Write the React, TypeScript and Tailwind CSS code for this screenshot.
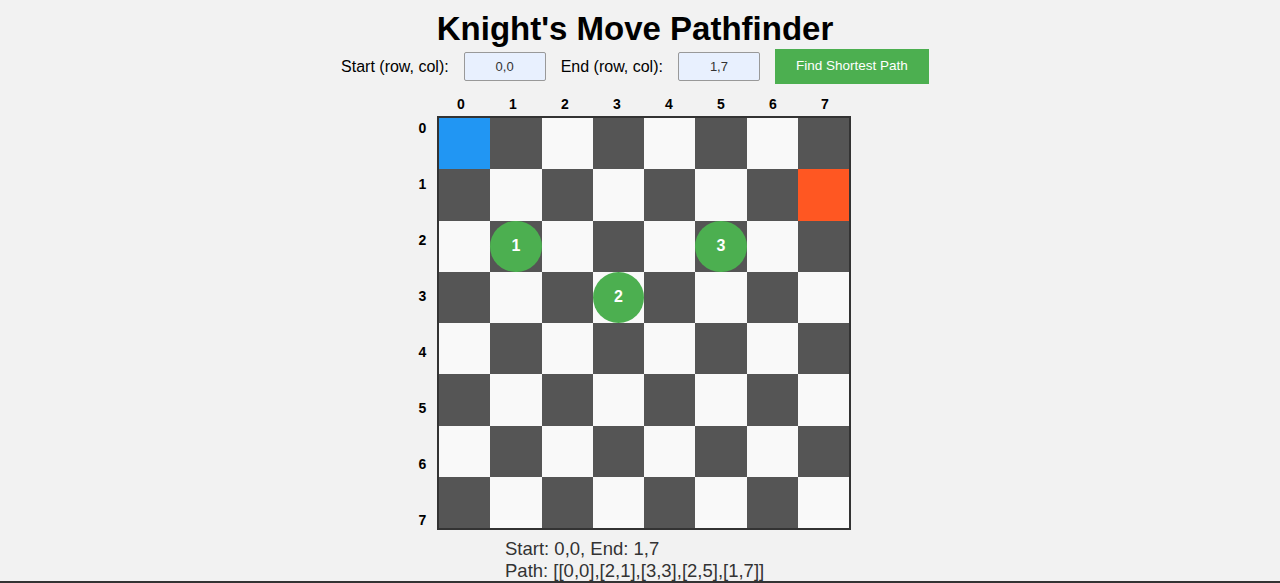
import React, { useState } from "react";

const SIZE = 8;

const App: React.FC = () => {
  const [start, setStart] = useState("0,0");
  const [end, setEnd] = useState("1,7");
  const path: number[][] = [
    [0, 0],
    [2, 1],
    [3, 3],
    [2, 5],
    [1, 7],
  ];

  const stepAt = (r: number, c: number) => {
    for (let i = 1; i < path.length - 1; i++) {
      if (path[i][0] === r && path[i][1] === c) return i;
    }
    return 0;
  };

  const cells = [];
  for (let r = 0; r < SIZE; r++) {
    for (let c = 0; c < SIZE; c++) {
      const isStart = r === 0 && c === 0;
      const isEnd = r === 1 && c === 7;
      const step = stepAt(r, c);
      let bg = (r + c) % 2 === 0 ? "bg-[#f9f9f9]" : "bg-[#555555]";
      if (isStart) bg = "bg-[#2196f3]";
      if (isEnd) bg = "bg-[#ff5722]";
      cells.push(
        <div key={`${r}-${c}`} className={`${bg} flex items-center justify-center`}>
          {step > 0 && (
            <div className="w-full h-full rounded-full bg-[#4caf50] text-white font-bold text-[16px] flex items-center justify-center">
              {step}
            </div>
          )}
        </div>
      );
    }
  }

  return (
    <div className="w-[1280px] h-[583px] bg-[#f2f2f2] font-['Liberation_Sans',Arial,sans-serif] text-black overflow-hidden relative">
      <h1 className="pt-[10px] pr-[10px] text-center text-[33px] leading-[37px] font-bold">
        Knight's Move Pathfinder
      </h1>

      <div className="mt-[2px] h-[35px] pr-[10px] flex items-center justify-center text-[16px]">
        <label className="mr-[15px]">Start (row, col):</label>
        <input
          value={start}
          onChange={(e) => setStart(e.target.value)}
          className="w-[82px] h-[29px] bg-[#e8f0fe] border border-[#999] rounded-[2px] text-center text-[13px] text-[#333] outline-none"
        />
        <label className="ml-[15px] mr-[15px]">End (row, col):</label>
        <input
          value={end}
          onChange={(e) => setEnd(e.target.value)}
          className="w-[82px] h-[29px] bg-[#e8f0fe] border border-[#999] rounded-[2px] text-center text-[13px] text-[#333] outline-none"
        />
        <button className="ml-[15px] w-[154px] h-[35px] bg-[#4caf50] text-white text-[13.5px]">
          Find Shortest Path
        </button>
      </div>

      <div className="flex pl-[410px] mt-[12px]">
        <div className="w-[25px] flex flex-col pt-[4px]">
          {Array.from({ length: SIZE }, (_, i) => (
            <div key={i} className="h-[56px] flex items-center justify-center font-bold text-[14px]">
              {i}
            </div>
          ))}
        </div>
        <div>
          <div className="flex h-[16px] mb-[4px]">
            {Array.from({ length: SIZE }, (_, i) => (
              <div key={i} className="w-[52px] text-center font-bold text-[14px] leading-[16px]">
                {i}
              </div>
            ))}
          </div>
          <div className="ml-[2px] w-[414px] h-[414px] border-2 border-[#333] grid grid-cols-8 grid-rows-8">
            {cells}
          </div>
        </div>
      </div>

      <div className="absolute left-[505px] top-[538px] text-[18.5px] leading-[22px] text-[#333]">
        <div>
          Start: {start}, End: {end}
        </div>
        <div>Path: {JSON.stringify(path)}</div>
      </div>

      <div className="absolute left-0 right-0 top-[581px] h-[2px] bg-[#333]" />
    </div>
  );
};

export default App;
